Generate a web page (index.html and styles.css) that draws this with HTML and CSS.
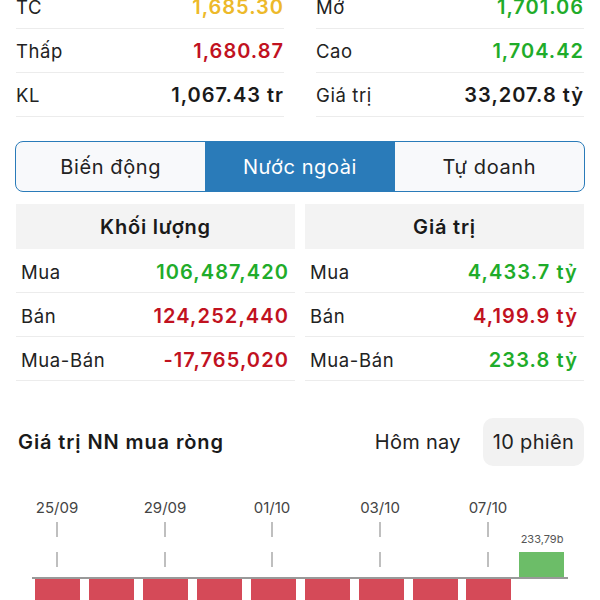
FILE: index.html
```html
<!DOCTYPE html>
<html>
   <head>
      <meta name="viewport" content="width=device-width, initial-scale=1">
      <link rel="stylesheet" href="styles.css">
   </head>
   <body>
      <div class="page">
         <div class="stats">
            <div class="stat"><span class="lbl">TC</span><span class="val ref">1,685.30</span></div>
            <div class="stat"><span class="lbl">Mở</span><span class="val up">1,701.06</span></div>
            <div class="stat"><span class="lbl">Thấp</span><span class="val down">1,680.87</span></div>
            <div class="stat"><span class="lbl">Cao</span><span class="val up">1,704.42</span></div>
            <div class="stat"><span class="lbl">KL</span><span class="val">1,067.43 tr</span></div>
            <div class="stat"><span class="lbl">Giá trị</span><span class="val">33,207.8 tỷ</span></div>
         </div>

         <div class="tabs">
            <div class="tab">Biến động</div>
            <div class="tab active">Nước ngoài</div>
            <div class="tab">Tự doanh</div>
         </div>

         <div class="trade">
            <div class="col">
               <div class="head">Khối lượng</div>
               <div class="row"><span class="lbl">Mua</span><span class="val up">106,487,420</span></div>
               <div class="row"><span class="lbl">Bán</span><span class="val down">124,252,440</span></div>
               <div class="row"><span class="lbl">Mua-Bán</span><span class="val down">-17,765,020</span></div>
            </div>
            <div class="col">
               <div class="head">Giá trị</div>
               <div class="row"><span class="lbl">Mua</span><span class="val up">4,433.7 tỷ</span></div>
               <div class="row"><span class="lbl">Bán</span><span class="val down">4,199.9 tỷ</span></div>
               <div class="row"><span class="lbl">Mua-Bán</span><span class="val up">233.8 tỷ</span></div>
            </div>
         </div>

         <div class="chart-head">
            <span class="title">Giá trị NN mua ròng</span>
            <div class="range">
               <span class="opt">Hôm nay</span>
               <span class="opt on">10 phiên</span>
            </div>
         </div>
      </div>

      <svg class="chart" width="600" height="120" viewBox="0 0 600 120">
         <g class="dates">
            <text x="57" y="33">25/09</text>
            <text x="165" y="33">29/09</text>
            <text x="272" y="33">01/10</text>
            <text x="380" y="33">03/10</text>
            <text x="488" y="33">07/10</text>
         </g>
         <g class="ticks">
            <line x1="57" y1="42" x2="57" y2="57"/><line x1="57" y1="72" x2="57" y2="87"/>
            <line x1="165" y1="42" x2="165" y2="57"/><line x1="165" y1="72" x2="165" y2="87"/>
            <line x1="272" y1="42" x2="272" y2="57"/><line x1="272" y1="72" x2="272" y2="87"/>
            <line x1="380" y1="42" x2="380" y2="57"/><line x1="380" y1="72" x2="380" y2="87"/>
            <line x1="488" y1="42" x2="488" y2="57"/><line x1="488" y1="72" x2="488" y2="87"/>
         </g>
         <g class="neg">
            <rect x="35" y="99" width="45" height="30"/>
            <rect x="89" y="99" width="45" height="30"/>
            <rect x="143" y="99" width="45" height="30"/>
            <rect x="197" y="99" width="45" height="30"/>
            <rect x="251" y="99" width="45" height="30"/>
            <rect x="305" y="99" width="45" height="30"/>
            <rect x="359" y="99" width="45" height="30"/>
            <rect x="413" y="99" width="45" height="30"/>
            <rect x="466" y="99" width="45" height="30"/>
         </g>
         <rect class="pos" x="519" y="72" width="45" height="26"/>
         <text class="bar-lbl" x="542" y="63">233,79b</text>
         <line class="axis" x1="32" y1="98" x2="568" y2="98"/>
      </svg>
   </body>
</html>
```

FILE: styles.css
```css
body {
margin: 0;
font-family: Inter, "Noto Sans", sans-serif;
color: #222;
background: #fff;
overflow: hidden;
}
.page {
padding: 0 16px;
margin-top: -15px;
}
.stats {
display: grid;
grid-template-columns: 1fr 1fr;
column-gap: 32px;
}
.stat {
display: flex;
justify-content: space-between;
align-items: center;
height: 43px;
border-bottom: 1px solid #ececec;
}
.lbl {
font-size: 18.5px;
letter-spacing: 0.6px;
color: #222;
}
.val {
font-size: 20px;
font-weight: 600;
letter-spacing: 1px;
color: #1a1a1a;
}
.ref {color: #edb92a;}
.up {color: #1fac2a;}
.down {color: #c1121f;}

.tabs {
display: grid;
grid-template-columns: 1fr 1fr 1fr;
margin: 24px -1px 0 -1px;
height: 51px;
border: 1.5px solid #2a7bb9;
border-radius: 8px;
overflow: hidden;
background: #f8f9fb;
box-sizing: border-box;
}
.tab {
display: flex;
align-items: center;
justify-content: center;
font-size: 20px;
letter-spacing: 0.6px;
color: #222;
}
.tab.active {
background: #2a7bb9;
color: #fff;
}

.trade {
display: grid;
grid-template-columns: 1fr 1fr;
column-gap: 10px;
margin-top: 12px;
}
.head {
height: 45px;
display: flex;
align-items: center;
justify-content: center;
background: #f3f3f3;
font-size: 20px;
font-weight: 600;
letter-spacing: 0.8px;
color: #1a1a1a;
}
.row {
display: flex;
justify-content: space-between;
align-items: center;
box-sizing: border-box;
height: 44px;
padding: 2px 6px 0 5px;
border-bottom: 1px solid #ececec;
}
.row .val {
letter-spacing: 1.1px;
}

.chart-head {
display: flex;
justify-content: space-between;
align-items: center;
margin-top: 37px;
padding-left: 2px;
}
.title {
font-size: 20px;
font-weight: 600;
letter-spacing: 0.9px;
color: #1a1a1a;
}
.range {
display: flex;
align-items: center;
gap: 12px;
}
.opt {
font-size: 20px;
letter-spacing: 0.3px;
color: #222;
padding: 12px 10px;
border-radius: 10px;
}
.opt.on {
background: #f2f2f2;
}

.chart {
display: block;
margin-top: 14px;
font-family: Inter, "Noto Sans", sans-serif;
}
.dates text {
font-size: 15px;
fill: #444;
text-anchor: middle;
}
.ticks line {
stroke: #aaa;
stroke-width: 1.5;
}
.neg rect {fill: #d54a58;}
.pos {fill: #6cbd68;}
.bar-lbl {
font-size: 11px;
fill: #555;
text-anchor: middle;
}
.axis {
stroke: #999;
stroke-width: 2;
}
```
